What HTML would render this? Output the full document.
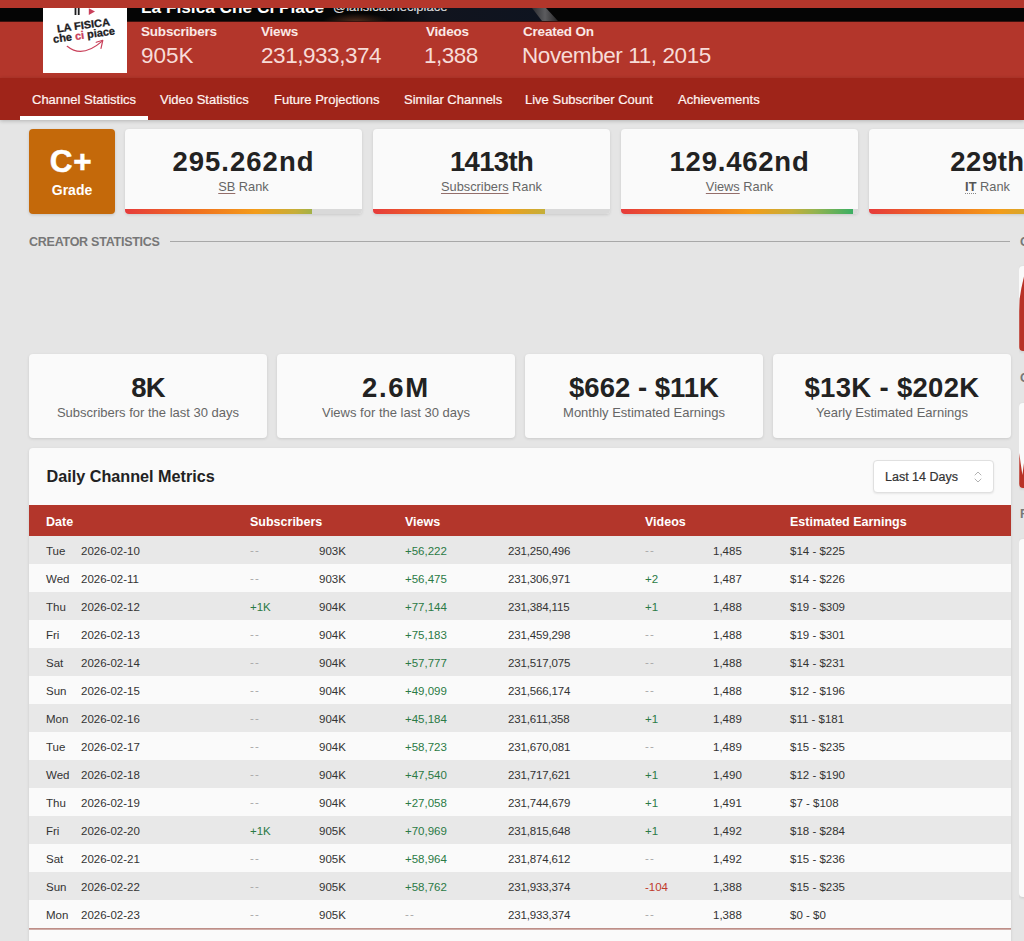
<!DOCTYPE html>
<html lang="en">
<head>
<meta charset="utf-8">
<title>La Fisica Che Ci Piace - Channel Statistics</title>
<style>
*{box-sizing:border-box;margin:0;padding:0}
html,body{width:1024px;height:941px;overflow:hidden}
body{background:#e5e5e5;font-family:"Liberation Sans",Arial,sans-serif;color:#222;position:relative}
.abs{position:absolute}
#topstrip{left:0;top:0;width:1024px;height:8px;background:#b3362b}
#banner{left:0;top:8px;width:1024px;height:13px;background:#050505;overflow:hidden}
#header{left:0;top:21px;width:1024px;height:57px;background:linear-gradient(#3a120e 0,#3a120e 1px,#b3362b 1px)}
#avatar{left:43px;top:8px;width:84px;height:65px;background:#fff;overflow:hidden}
#chname{left:141px;top:-10.8px;font-size:17.25px;font-weight:bold;color:#fff;white-space:nowrap;line-height:20px}
#handle{left:333px;top:-8.6px;font-size:13px;color:#d9d9d9;-webkit-text-stroke:.2px #d9d9d9;white-space:nowrap;line-height:15px}
.hl{position:absolute;top:24px;font-size:13.5px;letter-spacing:-.2px;font-weight:bold;color:#fbe9e6;line-height:16px;white-space:nowrap}
.hv{position:absolute;top:43px;font-size:22.5px;color:#f7dcd8;line-height:26px;white-space:nowrap;font-weight:normal}
#nav{left:0;top:78px;width:1024px;height:42px;background:#9f2419;box-shadow:0 1px 4px rgba(0,0,0,.22)}
.tab{position:absolute;top:93px;font-size:13px;color:#fff4f2;-webkit-text-stroke:.2px #fff4f2;line-height:14px;white-space:nowrap}
#tabline{left:20px;top:116px;width:128px;height:4px;background:#fff}
#grade{left:29px;top:129px;width:86px;height:85px;background:#c4690a;border-radius:4px;color:#fff;text-align:center;box-shadow:0 1px 3px rgba(0,0,0,.15)}
#grade .g1{position:absolute;left:0;width:86px;top:144px;font-size:30px;font-weight:bold;line-height:34px}
.rank{position:absolute;top:129px;height:85px;width:237px;background:#fafafa;border-radius:4px;overflow:hidden;box-shadow:0 1px 3px rgba(0,0,0,.12);text-align:center}
.rank .n{position:absolute;left:0;right:0;top:17.5px;font-size:27.5px;font-weight:bold;color:#222;line-height:30px;white-space:nowrap}
.rank .l{position:absolute;left:0;right:0;top:50px;font-size:12.8px;color:#666;line-height:15px;white-space:nowrap}
.rank .l u{text-decoration:underline;text-underline-offset:1.5px;text-decoration-thickness:1px;text-decoration-color:#946e6a}
.rank .bar{position:absolute;left:0;bottom:0;height:5px;width:100%;background:#d9d9d9}
.rank .bar i{display:block;height:5px;background:linear-gradient(90deg,#e63b3b 0%,#f0701f 30%,#f39c1a 55%,#c6ae38 72%,#93b350 82%,#2fae66 100%);background-size:237px 5px;background-repeat:no-repeat}
.stat{position:absolute;top:354px;height:84px;width:238px;background:#fafafa;border-radius:4px;box-shadow:0 1px 3px rgba(0,0,0,.12);text-align:center}
.stat .n{position:absolute;left:0;right:0;top:18.8px;font-size:27.5px;font-weight:bold;color:#222;line-height:30px;white-space:nowrap}
.stat .l{position:absolute;left:0;right:0;top:51px;font-size:13px;color:#666;line-height:15px;white-space:nowrap}
#sect{left:29px;top:234.7px;font-size:12.5px;font-weight:bold;color:#777;line-height:14px;letter-spacing:-.25px;white-space:nowrap}
#sectline{left:170px;top:241px;width:840px;height:1px;background:#a8a8a8}
#tcard{left:29px;top:448px;width:982px;height:520px;background:#fafafa;border-radius:4px 4px 0 0;box-shadow:0 1px 3px rgba(0,0,0,.12);overflow:hidden}
#ttitle{left:17.5px;top:18px;font-size:16.2px;font-weight:bold;color:#222;line-height:20px;white-space:nowrap}
#sel{left:844px;top:12px;width:121px;height:33px;background:#fff;border:1px solid #e0e0e0;border-radius:4px;box-shadow:0 1px 2px rgba(0,0,0,.08)}
#sel span{position:absolute;left:11px;top:9px;font-size:12.5px;color:#333;-webkit-text-stroke:.2px #333;line-height:14px;white-space:nowrap}
#thead{left:0;top:57px;width:982px;height:31px;background:#b3362b}
#thead b{position:absolute;top:10.3px;font-size:12.5px;color:#fff;line-height:14px;white-space:nowrap}
.row{position:absolute;left:0;width:982px;height:28px;font-size:11.5px;color:#333;line-height:28px}
.row.g{background:#e8e8e8}
.row span{position:absolute;top:1px;white-space:nowrap}
.c1{left:17px}.c2{left:52px}.c3{left:221px}.c4{left:290px}.c5{left:376px}.c6{left:479px;letter-spacing:-.15px}.c7{left:616px}.c8{left:684px}.c9{left:761px}
.sl{left:1px;font-size:12.5px;font-weight:bold;color:#777;line-height:14px;letter-spacing:-.25px}
.sc{left:0;width:20px;background:#fafafa;border-radius:4px 0 0 4px;box-shadow:0 1px 3px rgba(0,0,0,.12)}
.up{color:#2b7a45}.dn{color:#c0392b}.na{color:#a8a8a8;letter-spacing:1.2px;margin-top:-1px}
</style>
</head>
<body>
<div id="topstrip" class="abs"></div>
<div id="banner" class="abs">
  <svg class="abs" style="left:0;top:0" width="1024" height="13" viewBox="0 0 1024 13">
    <defs>
      <linearGradient id="bn" x1="0" x2="1" y1="0" y2="0"><stop offset="0" stop-color="#10131c" stop-opacity="0"/><stop offset=".35" stop-color="#11141e"/><stop offset="1" stop-color="#0e1420"/></linearGradient>
      <radialGradient id="bh" cx=".5" cy=".5" r=".5"><stop offset="0" stop-color="#56301f"/><stop offset="1" stop-color="#4a2a1c" stop-opacity="0"/></radialGradient>
      <linearGradient id="bs" x1="0" x2="1" y1="0" y2="0"><stop offset="0" stop-color="#2c2d31"/><stop offset=".5" stop-color="#5c5c5f"/><stop offset="1" stop-color="#262628"/></linearGradient>
    </defs>
    <path d="M370 0 L540 0 L550 13 L370 13 Z" fill="url(#bn)"/>
    <ellipse cx="356" cy="14" rx="34" ry="9" fill="url(#bh)"/>
    <path d="M532 0 L546 0 L558 13 L542 13 Z" fill="url(#bs)"/>
  </svg>
  <div id="chname" class="abs">La Fisica Che Ci Piace</div>
  <div id="handle" class="abs">@lafisicachecipiace</div>
</div>
<div id="header" class="abs"></div>
<div id="avatar" class="abs">
  <svg width="84" height="65" viewBox="0 0 84 65">
    <rect x="31.6" y="0" width="1.8" height="7" fill="#1d1d1f"/><rect x="34.8" y="0" width="1.8" height="7" fill="#1d1d1f"/>
    <path d="M45.8 0.3 L52 3.6 L45.8 7 Z" fill="#c9405a"/>
    <g font-family="'Liberation Sans',sans-serif" font-weight="bold" fill="#1d1d1f" stroke="#1d1d1f" stroke-width=".3">
      <text transform="translate(14.4 24.4) rotate(-7.6)" x="0" y="0" font-size="10.6" textLength="53.4" lengthAdjust="spacingAndGlyphs">LA FISICA</text>
      <text transform="translate(10.6 34.9) rotate(-7.8)" x="0" y="0" font-size="11" textLength="62.4" lengthAdjust="spacingAndGlyphs">che <tspan fill="#c9405a" stroke="#c9405a">ci</tspan> piace</text>
    </g>
    <path d="M24.2 38.3 Q39 50.5 58.6 33.6" fill="none" stroke="#c9405a" stroke-width="1.2" stroke-linecap="round"/>
    <path d="M53.2 34.3 L59.8 32.3 L58 40.3" fill="none" stroke="#c9405a" stroke-width="1.2" stroke-linecap="round" stroke-linejoin="round"/>
  </svg>
</div>
<div class="hl" style="left:141px">Subscribers</div><div class="hv" style="left:141px">905K</div>
<div class="hl" style="left:261px">Views</div><div class="hv" style="left:261px;letter-spacing:-.45px">231,933,374</div>
<div class="hl" style="left:426px">Videos</div><div class="hv" style="left:424px;letter-spacing:-.5px">1,388</div>
<div class="hl" style="left:523px">Created On</div><div class="hv" style="left:522px;letter-spacing:-.42px">November 11, 2015</div>
<div id="nav" class="abs"></div>
<div class="tab" style="left:32px">Channel Statistics</div>
<div class="tab" style="left:160px">Video Statistics</div>
<div class="tab" style="left:274px">Future Projections</div>
<div class="tab" style="left:404px">Similar Channels</div>
<div class="tab" style="left:525px">Live Subscriber Count</div>
<div class="tab" style="left:678px">Achievements</div>
<div id="tabline" class="abs"></div>

<div id="grade" class="abs"></div>
<div class="abs g1" style="left:27.7px;width:87px;top:144px;font-size:31.5px;font-weight:bold;line-height:34px;color:#fff;text-align:center;letter-spacing:.8px;-webkit-text-stroke:.5px #fff">C+</div>
<div class="abs g2" style="left:29px;width:86px;top:182px;font-size:14px;font-weight:bold;line-height:16px;color:#fff;text-align:center">Grade</div>

<div class="rank" style="left:125px"><div class="n" style="letter-spacing:1px">295.262nd</div><div class="l"><u>SB</u> Rank</div><div class="bar"><i style="width:79%"></i></div></div>
<div class="rank" style="left:373px"><div class="n" style="letter-spacing:-.66px">1413th</div><div class="l"><u>Subscribers</u> Rank</div><div class="bar"><i style="width:72.4%"></i></div></div>
<div class="rank" style="left:621px"><div class="n" style="letter-spacing:.78px">129.462nd</div><div class="l"><u>Views</u> Rank</div><div class="bar"><i style="width:98%"></i></div></div>
<div class="rank" style="left:869px"><div class="n" style="letter-spacing:.5px">229th</div><div class="l"><u style="text-decoration-style:dotted;font-weight:bold;color:#555;text-decoration-color:#888">IT</u> Rank</div><div class="bar"><i style="width:90%"></i></div></div>

<div id="sect" class="abs">CREATOR STATISTICS</div>
<div id="sectline" class="abs"></div>

<div class="stat" style="left:29px"><div class="n" style="letter-spacing:-0.73px">8K</div><div class="l">Subscribers for the last 30 days</div></div>
<div class="stat" style="left:277px"><div class="n" style="letter-spacing:1.7px">2.6M</div><div class="l">Views for the last 30 days</div></div>
<div class="stat" style="left:525px"><div class="n" style="letter-spacing:0px">$662 - $11K</div><div class="l">Monthly Estimated Earnings</div></div>
<div class="stat" style="left:773px"><div class="n" style="letter-spacing:0.32px">$13K - $202K</div><div class="l">Yearly Estimated Earnings</div></div>

<div id="side" class="abs" style="left:1019px;top:0;width:5px;height:941px;overflow:hidden">
  <div class="abs sl" style="top:234.7px">CHANNEL</div>
  <div class="abs sc" style="top:266px;height:85px"></div>
  <svg class="abs" style="left:0;top:266px" width="5" height="85" viewBox="0 0 5 85"><path d="M5 10.5 L2.4 22 L0.6 33 L0.2 45 L0.2 81 Q0.2 85 4 85 L5 85 Z" fill="#b83226"/></svg>
  <div class="abs sl" style="top:371px">CHANNEL</div>
  <div class="abs sc" style="top:403px;height:85px"></div>
  <svg class="abs" style="left:0;top:403px" width="5" height="85" viewBox="0 0 5 85"><path d="M0.3 50 L1.6 60 L3.4 72 L5 60 L5 85 L4 85 Q0.2 85 0.2 81 Z" fill="#b83226"/></svg>
  <div class="abs sl" style="top:507.3px">RECENT</div>
  <div class="abs sc" style="top:539px;height:358px"></div>
</div>
<div id="tcard" class="abs">
  <div id="ttitle" class="abs">Daily Channel Metrics</div>
  <div id="sel" class="abs"><span>Last 14 Days</span>
    <svg class="abs" style="left:99px;top:9px" width="10" height="14" viewBox="0 0 10 14"><path d="M2 5 L5 2 L8 5 M2 9 L5 12 L8 9" fill="none" stroke="#b3b3b3" stroke-width="1" stroke-linecap="round" stroke-linejoin="round"/></svg>
  </div>
  <div id="thead" class="abs"><b style="left:17px">Date</b><b style="left:221px">Subscribers</b><b style="left:376px">Views</b><b style="left:616px">Videos</b><b style="left:761px">Estimated Earnings</b></div>
  <div class="row g" style="top:88px"><span class="c1">Tue</span><span class="c2">2026-02-10</span><span class="c3 na">--</span><span class="c4">903K</span><span class="c5 up">+56,222</span><span class="c6">231,250,496</span><span class="c7 na">--</span><span class="c8">1,485</span><span class="c9">$14 - $225</span></div>
  <div class="row" style="top:116px"><span class="c1">Wed</span><span class="c2">2026-02-11</span><span class="c3 na">--</span><span class="c4">903K</span><span class="c5 up">+56,475</span><span class="c6">231,306,971</span><span class="c7 up">+2</span><span class="c8">1,487</span><span class="c9">$14 - $226</span></div>
  <div class="row g" style="top:144px"><span class="c1">Thu</span><span class="c2">2026-02-12</span><span class="c3 up">+1K</span><span class="c4">904K</span><span class="c5 up">+77,144</span><span class="c6">231,384,115</span><span class="c7 up">+1</span><span class="c8">1,488</span><span class="c9">$19 - $309</span></div>
  <div class="row" style="top:172px"><span class="c1">Fri</span><span class="c2">2026-02-13</span><span class="c3 na">--</span><span class="c4">904K</span><span class="c5 up">+75,183</span><span class="c6">231,459,298</span><span class="c7 na">--</span><span class="c8">1,488</span><span class="c9">$19 - $301</span></div>
  <div class="row g" style="top:200px"><span class="c1">Sat</span><span class="c2">2026-02-14</span><span class="c3 na">--</span><span class="c4">904K</span><span class="c5 up">+57,777</span><span class="c6">231,517,075</span><span class="c7 na">--</span><span class="c8">1,488</span><span class="c9">$14 - $231</span></div>
  <div class="row" style="top:228px"><span class="c1">Sun</span><span class="c2">2026-02-15</span><span class="c3 na">--</span><span class="c4">904K</span><span class="c5 up">+49,099</span><span class="c6">231,566,174</span><span class="c7 na">--</span><span class="c8">1,488</span><span class="c9">$12 - $196</span></div>
  <div class="row g" style="top:256px"><span class="c1">Mon</span><span class="c2">2026-02-16</span><span class="c3 na">--</span><span class="c4">904K</span><span class="c5 up">+45,184</span><span class="c6">231,611,358</span><span class="c7 up">+1</span><span class="c8">1,489</span><span class="c9">$11 - $181</span></div>
  <div class="row" style="top:284px"><span class="c1">Tue</span><span class="c2">2026-02-17</span><span class="c3 na">--</span><span class="c4">904K</span><span class="c5 up">+58,723</span><span class="c6">231,670,081</span><span class="c7 na">--</span><span class="c8">1,489</span><span class="c9">$15 - $235</span></div>
  <div class="row g" style="top:312px"><span class="c1">Wed</span><span class="c2">2026-02-18</span><span class="c3 na">--</span><span class="c4">904K</span><span class="c5 up">+47,540</span><span class="c6">231,717,621</span><span class="c7 up">+1</span><span class="c8">1,490</span><span class="c9">$12 - $190</span></div>
  <div class="row" style="top:340px"><span class="c1">Thu</span><span class="c2">2026-02-19</span><span class="c3 na">--</span><span class="c4">904K</span><span class="c5 up">+27,058</span><span class="c6">231,744,679</span><span class="c7 up">+1</span><span class="c8">1,491</span><span class="c9">$7 - $108</span></div>
  <div class="row g" style="top:368px"><span class="c1">Fri</span><span class="c2">2026-02-20</span><span class="c3 up">+1K</span><span class="c4">905K</span><span class="c5 up">+70,969</span><span class="c6">231,815,648</span><span class="c7 up">+1</span><span class="c8">1,492</span><span class="c9">$18 - $284</span></div>
  <div class="row" style="top:396px"><span class="c1">Sat</span><span class="c2">2026-02-21</span><span class="c3 na">--</span><span class="c4">905K</span><span class="c5 up">+58,964</span><span class="c6">231,874,612</span><span class="c7 na">--</span><span class="c8">1,492</span><span class="c9">$15 - $236</span></div>
  <div class="row g" style="top:424px"><span class="c1">Sun</span><span class="c2">2026-02-22</span><span class="c3 na">--</span><span class="c4">905K</span><span class="c5 up">+58,762</span><span class="c6">231,933,374</span><span class="c7 dn">-104</span><span class="c8">1,388</span><span class="c9">$15 - $235</span></div>
  <div class="row" style="top:452px"><span class="c1">Mon</span><span class="c2">2026-02-23</span><span class="c3 na">--</span><span class="c4">905K</span><span class="c5 na">--</span><span class="c6">231,933,374</span><span class="c7 na">--</span><span class="c8">1,388</span><span class="c9">$0 - $0</span></div>
  <div class="abs" style="left:0;top:480px;width:982px;height:2px;background:linear-gradient(#b47f78,#d9bcb8)"></div>
</div>
</body>
</html>
